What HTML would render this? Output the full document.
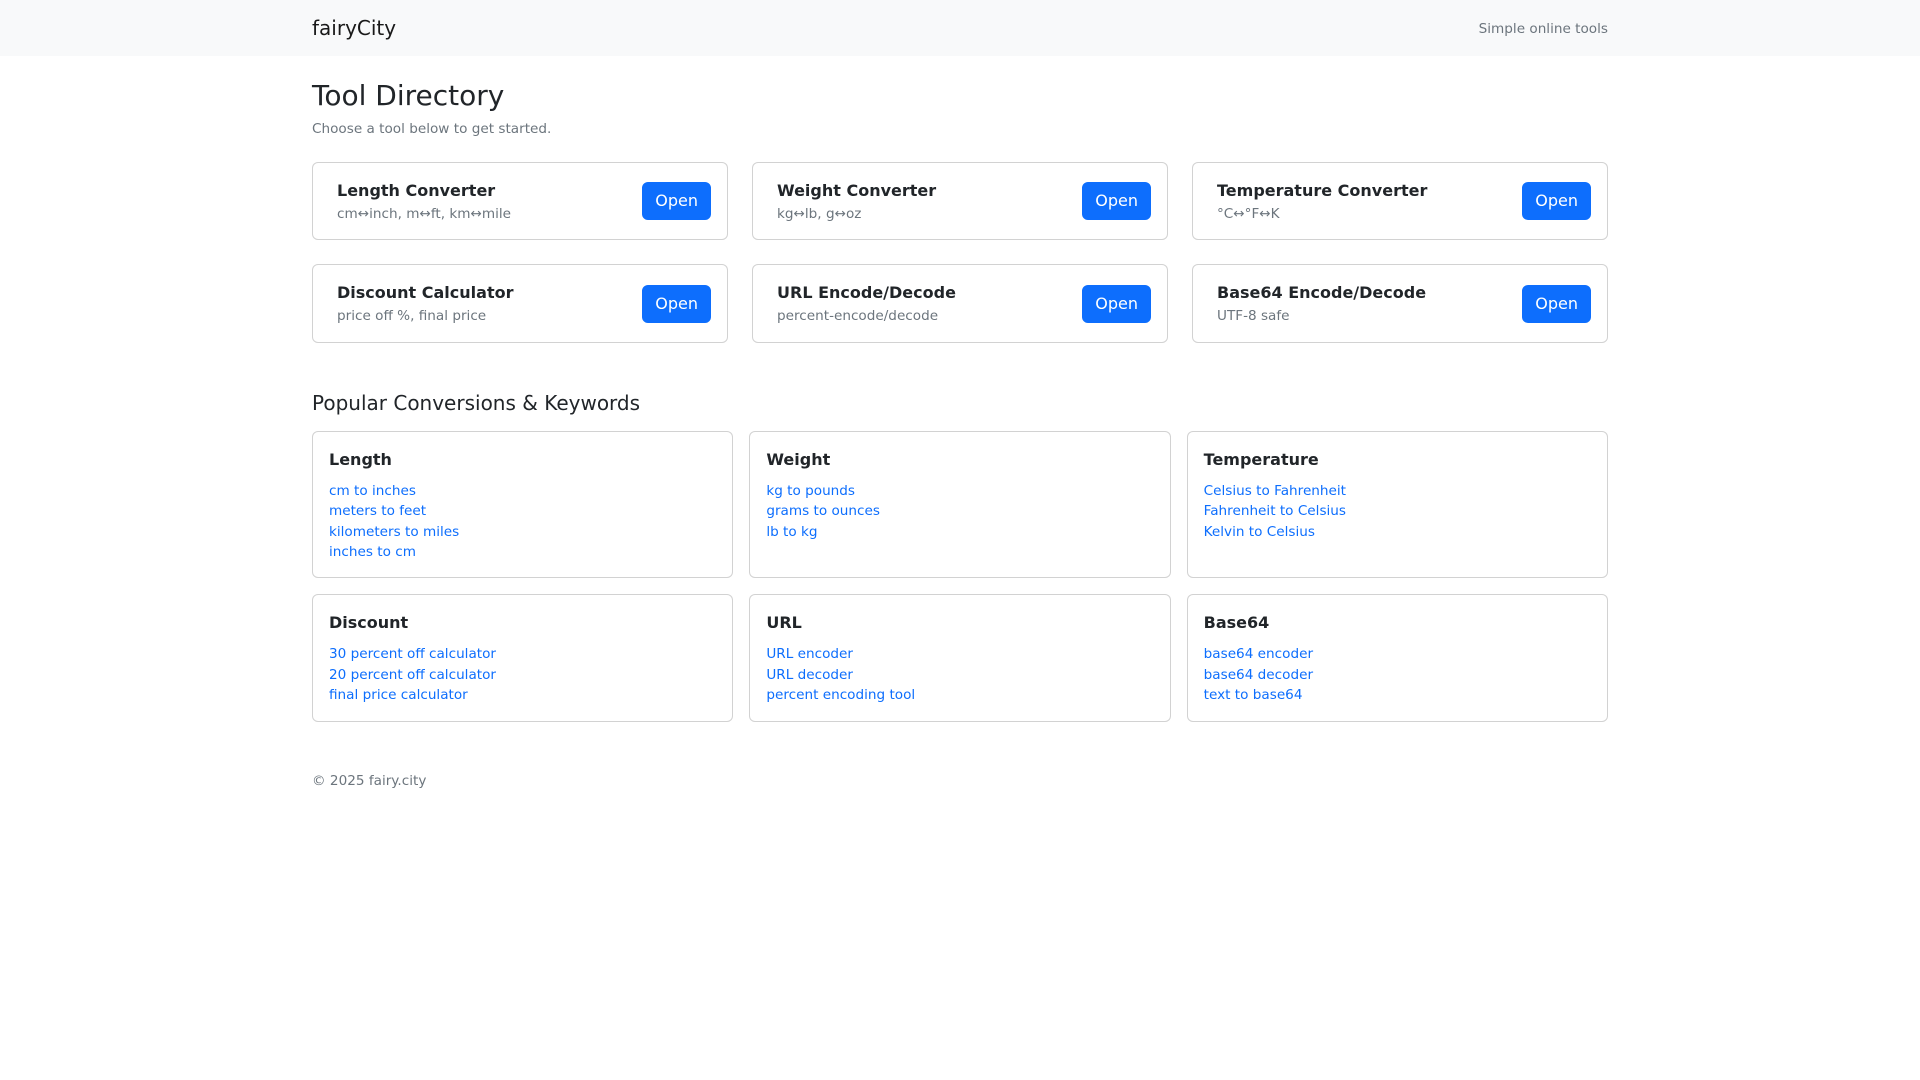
<!DOCTYPE html>
<html lang="en">
<head>
<meta charset="utf-8">
<title>fairyCity</title>
<style>
*{box-sizing:border-box}
html,body{margin:0;padding:0}
body{width:1920px;height:1080px;background:#fff;color:#212529;font-family:"DejaVu Sans",sans-serif;font-size:16px;line-height:1.5;overflow:hidden}
a{text-decoration:none}
.wrap{width:1320px;margin:0 auto;padding:0 12px}
nav{background:#f8f9fa;height:56px}
nav .wrap{display:flex;justify-content:space-between;align-items:center;height:56px}
.brand{font-size:20px;line-height:30px;color:rgba(0,0,0,.9)}
.muted{color:#6c757d}
.small{font-size:13.6px;line-height:20.4px;position:relative;top:1px}
main{padding-top:24px}
h1{font-size:28px;font-weight:500;line-height:1.2;margin:0 0 4px;position:relative;top:-1px}
.lead-p{margin:0 0 24px}
.grid1{display:grid;grid-template-columns:repeat(3,416px);column-gap:24px;row-gap:24px}
.tool{border:1px solid rgba(0,0,0,.175);border-radius:6px;padding:16px;display:flex;justify-content:space-between;align-items:center;background:#fff}
.tool .txt{margin-left:8px}
.tool h6{font-size:16px;font-weight:700;line-height:24px;margin:0}
.btn{display:inline-block;background:#0d6efd;color:#fff;border:1px solid #0d6efd;border-radius:6px;padding:6px 12px;font-size:16px;line-height:24px}
h2{font-size:20px;font-weight:500;line-height:1.2;margin:48px 0 16px}
.grid2{display:grid;grid-template-columns:repeat(3,421.33px);column-gap:16px;row-gap:16px}
.kw{border:1px solid rgba(0,0,0,.175);border-radius:6px;padding:16px;background:#fff}
.kw h6{font-size:16px;font-weight:700;line-height:24px;margin:0 0 8px}
.kw a{display:block;color:#0d6efd;font-size:13.6px;line-height:20.4px;position:relative;top:1px}
footer{margin-top:48px}
</style>
</head>
<body>
<nav><div class="wrap"><a class="brand" href="#">fairyCity</a><span class="muted small">Simple online tools</span></div></nav>
<main><div class="wrap">
<h1>Tool Directory</h1>
<p class="muted small lead-p">Choose a tool below to get started.</p>
<div class="grid1">
<div class="tool"><div class="txt"><h6>Length Converter</h6><div class="muted small">cm↔inch, m↔ft, km↔mile</div></div><a class="btn" href="#">Open</a></div>
<div class="tool"><div class="txt"><h6>Weight Converter</h6><div class="muted small">kg↔lb, g↔oz</div></div><a class="btn" href="#">Open</a></div>
<div class="tool"><div class="txt"><h6>Temperature Converter</h6><div class="muted small">°C↔°F↔K</div></div><a class="btn" href="#">Open</a></div>
<div class="tool"><div class="txt"><h6>Discount Calculator</h6><div class="muted small">price off %, final price</div></div><a class="btn" href="#">Open</a></div>
<div class="tool"><div class="txt"><h6>URL Encode/Decode</h6><div class="muted small">percent-encode/decode</div></div><a class="btn" href="#">Open</a></div>
<div class="tool"><div class="txt"><h6>Base64 Encode/Decode</h6><div class="muted small">UTF-8 safe</div></div><a class="btn" href="#">Open</a></div>
</div>
<h2>Popular Conversions &amp; Keywords</h2>
<div class="grid2">
<div class="kw"><h6>Length</h6><a href="#">cm to inches</a><a href="#">meters to feet</a><a href="#">kilometers to miles</a><a href="#">inches to cm</a></div>
<div class="kw"><h6>Weight</h6><a href="#">kg to pounds</a><a href="#">grams to ounces</a><a href="#">lb to kg</a></div>
<div class="kw"><h6>Temperature</h6><a href="#">Celsius to Fahrenheit</a><a href="#">Fahrenheit to Celsius</a><a href="#">Kelvin to Celsius</a></div>
<div class="kw"><h6>Discount</h6><a href="#">30 percent off calculator</a><a href="#">20 percent off calculator</a><a href="#">final price calculator</a></div>
<div class="kw"><h6>URL</h6><a href="#">URL encoder</a><a href="#">URL decoder</a><a href="#">percent encoding tool</a></div>
<div class="kw"><h6>Base64</h6><a href="#">base64 encoder</a><a href="#">base64 decoder</a><a href="#">text to base64</a></div>
</div>
<footer class="muted small">© 2025 fairy.city</footer>
</div></main>
</body>
</html>
